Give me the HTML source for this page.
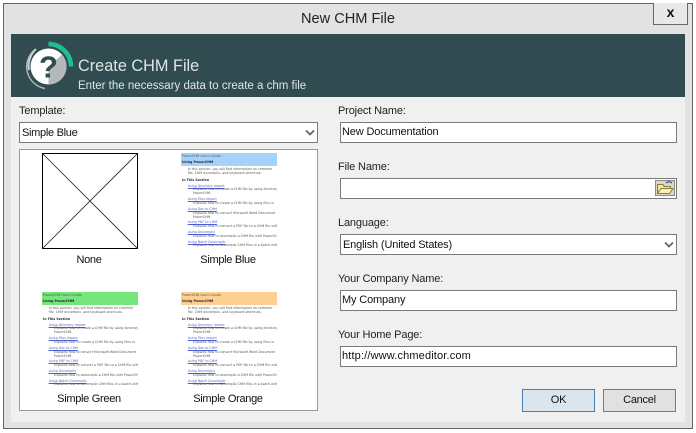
<!DOCTYPE html>
<html><head><meta charset="utf-8">
<style>
html,body{margin:0;padding:0;width:696px;height:433px;overflow:hidden;background:#fff}
body{position:relative;font-family:"Liberation Sans",sans-serif;color:#1a1a1a}
div,span{position:absolute;box-sizing:border-box;white-space:nowrap}
.lb{font-size:11px;line-height:18px;letter-spacing:-.15px;color:#222}
.in{background:#fff;border:1px solid #7a7a7a;font-size:11px;line-height:19px;padding-left:1px;letter-spacing:-.15px;height:21px;color:#111}
.cap{font-size:11px;line-height:18px;text-align:center;color:#111;letter-spacing:-.3px}
.th{width:96px;height:104px;overflow:hidden;font-family:"DejaVu Sans",sans-serif;font-size:3.25px;line-height:4px;color:#555;filter:blur(.2px);text-rendering:geometricPrecision}
.th span{transform:translateY(-2px)}
.th .a{color:#4a5fd0;text-decoration:underline;text-decoration-thickness:.3px}
.th .b{font-weight:bold;color:#222}
.hd{left:0;top:0;width:96px;height:12.5px}
.btn{font-size:11px;line-height:21px;text-align:center;height:23px;border:1px solid #7a7a7a;background:#e1e1e1;color:#111;letter-spacing:-.25px}
</style></head><body>
<div style="left:3px;top:3px;width:690px;height:426px;border:1px solid #666;background:#e2e2e2"></div>
<div style="left:11px;top:97px;width:674px;height:325px;background:#f0f0f0"></div>
<div style="left:11px;top:34px;width:674px;height:63px;background:#304c50"></div>
<div style="left:0;top:7px;width:696px;text-align:center;font-size:14.6px;line-height:24px;color:#222">New CHM File</div>
<div style="left:653px;top:3px;width:35px;height:22px;border:1px solid #666;border-top:0;background:#e8e8e8;text-align:center;font-weight:bold;font-size:14px;line-height:18px;color:#111">x</div>

<svg style="position:absolute;left:11px;top:34px" width="70" height="63" viewBox="11 34 70 63">
<path d="M48.5 44 A22.5 22.5 0 0 1 71 66.5" fill="none" stroke="#1fbf96" stroke-width="4.5"/>
<path d="M34.5 50 A22 22 0 0 0 45 88.5" fill="none" stroke="#aeb6b8" stroke-width="1.5"/>
<path d="M36 49 A23 23 0 0 0 29 70" fill="none" stroke="#c8cdce" stroke-width="2"/>
<circle cx="48.5" cy="66.5" r="18" fill="#fff"/>
<path d="M48.5 84.5 A18 18 0 0 0 66.5 66.5 A18 18 0 0 0 62 54.5 L48.5 66.5Z" fill="#b4b8ba"/>
<text x="48.5" y="77.5" text-anchor="middle" font-family="Liberation Sans" font-weight="bold" font-size="31" fill="#304c50">?</text>
</svg>
<div style="left:78px;top:55px;font-size:16.3px;line-height:22px;color:#dfe5e6">Create CHM File</div>
<div style="left:78px;top:78px;font-size:11.5px;line-height:17px;color:#dfe5e6">Enter the necessary data to create a chm file</div>

<div class="lb" style="left:19px;top:102px">Template:</div>
<div class="in" style="left:19px;top:122px;width:299px;padding-top:1px;padding-left:2px;letter-spacing:-.3px">Simple Blue</div>
<svg style="position:absolute;left:305px;top:129px" width="10" height="8"><path d="M1 1.5 L5 5.5 L9 1.5" fill="none" stroke="#666" stroke-width="1.8"/></svg>

<div style="left:19px;top:149px;width:299px;height:262px;background:#fff;border:1px solid #9a9a9a"></div>
<svg style="position:absolute;left:42px;top:153px" width="97" height="97"><rect x=".5" y=".5" width="95" height="95" fill="#fff" stroke="#000"/><path d="M.5 .5 L95.5 95.5 M95.5 .5 L.5 95.5" stroke="#222" stroke-width=".8"/></svg>
<div class="cap" style="left:19px;top:251px;width:140px">None</div>
<div class="cap" style="left:158px;top:251px;width:140px">Simple Blue</div>
<div class="cap" style="left:19px;top:390px;width:140px">Simple Green</div>
<div class="cap" style="left:158px;top:390px;width:140px">Simple Orange</div>

<div class="th" style="left:181px;top:153px">
<div class="hd" style="background:#a5d2fb"></div>
<span style="left:1px;top:3.3px">PowerCHM User's Guide</span><span class="b" style="left:1px;top:8.7px">Using PowerCHM</span>
<span style="left:6.7px;top:16.3px">In this section, you will find information on common</span><span style="left:6.7px;top:20.3px">file, CHM decompile, and keyboard shortcuts.</span>
<span class="b" style="left:1px;top:27px">In This Section</span>
<span class="a" style="left:6.7px;top:33px">Using Directory Import</span><span style="left:12px;top:36.3px">Explains how to create a CHM file by using directory</span><span style="left:12px;top:40.3px">PowerCHM.</span>
<span class="a" style="left:6.7px;top:46.3px">Using Files Import</span><span style="left:12px;top:50px">Explains how to create a CHM file by using files in</span>
<span class="a" style="left:6.7px;top:56px">Using Doc to CHM</span><span style="left:12px;top:59.7px">Explains how to convert Microsoft Word Document</span><span style="left:12px;top:63.7px">PowerCHM.</span>
<span class="a" style="left:6.7px;top:69.3px">Using PDF to CHM</span><span style="left:12px;top:73px">Explains how to convert a PDF file to a CHM file with</span>
<span class="a" style="left:6.7px;top:79.3px">Using Decompile</span><span style="left:12px;top:82.7px">Explains how to decompile a CHM file with PowerCHM</span>
<span class="a" style="left:6.7px;top:88.7px">Using Batch Decompile</span><span style="left:12px;top:92px">Explains how to decompile CHM files in a batch with</span>
</div>

<div class="th" style="left:42px;top:292px">
<div class="hd" style="background:#74e67c"></div>
<span style="left:1px;top:3.3px">PowerCHM User's Guide</span><span class="b" style="left:1px;top:8.7px">Using PowerCHM</span>
<span style="left:6.7px;top:16.3px">In this section, you will find information on common</span><span style="left:6.7px;top:20.3px">file, CHM decompile, and keyboard shortcuts.</span>
<span class="b" style="left:1px;top:27px">In This Section</span>
<span class="a" style="left:6.7px;top:33px">Using Directory Import</span><span style="left:12px;top:36.3px">Explains how to create a CHM file by using directory</span><span style="left:12px;top:40.3px">PowerCHM.</span>
<span class="a" style="left:6.7px;top:46.3px">Using Files Import</span><span style="left:12px;top:50px">Explains how to create a CHM file by using files in</span>
<span class="a" style="left:6.7px;top:56px">Using Doc to CHM</span><span style="left:12px;top:59.7px">Explains how to convert Microsoft Word Document</span><span style="left:12px;top:63.7px">PowerCHM.</span>
<span class="a" style="left:6.7px;top:69.3px">Using PDF to CHM</span><span style="left:12px;top:73px">Explains how to convert a PDF file to a CHM file with</span>
<span class="a" style="left:6.7px;top:79.3px">Using Decompile</span><span style="left:12px;top:82.7px">Explains how to decompile a CHM file with PowerCHM</span>
<span class="a" style="left:6.7px;top:88.7px">Using Batch Decompile</span><span style="left:12px;top:92px">Explains how to decompile CHM files in a batch with</span>
</div>

<div class="th" style="left:181px;top:292px">
<div class="hd" style="background:#fdcf90"></div>
<span style="left:1px;top:3.3px">PowerCHM User's Guide</span><span class="b" style="left:1px;top:8.7px">Using PowerCHM</span>
<span style="left:6.7px;top:16.3px">In this section, you will find information on common</span><span style="left:6.7px;top:20.3px">file, CHM decompile, and keyboard shortcuts.</span>
<span class="b" style="left:1px;top:27px">In This Section</span>
<span class="a" style="left:6.7px;top:33px">Using Directory Import</span><span style="left:12px;top:36.3px">Explains how to create a CHM file by using directory</span><span style="left:12px;top:40.3px">PowerCHM.</span>
<span class="a" style="left:6.7px;top:46.3px">Using Files Import</span><span style="left:12px;top:50px">Explains how to create a CHM file by using files in</span>
<span class="a" style="left:6.7px;top:56px">Using Doc to CHM</span><span style="left:12px;top:59.7px">Explains how to convert Microsoft Word Document</span><span style="left:12px;top:63.7px">PowerCHM.</span>
<span class="a" style="left:6.7px;top:69.3px">Using PDF to CHM</span><span style="left:12px;top:73px">Explains how to convert a PDF file to a CHM file with</span>
<span class="a" style="left:6.7px;top:79.3px">Using Decompile</span><span style="left:12px;top:82.7px">Explains how to decompile a CHM file with PowerCHM</span>
<span class="a" style="left:6.7px;top:88.7px">Using Batch Decompile</span><span style="left:12px;top:92px">Explains how to decompile CHM files in a batch with</span>
</div>

<div class="lb" style="left:338px;top:102px">Project Name:</div>
<div class="in" style="left:340px;top:122px;width:337px">New Documentation</div>
<div class="lb" style="left:338px;top:158px">File Name:</div>
<div class="in" style="left:340px;top:178px;width:337px"></div>
<svg style="position:absolute;left:655px;top:180px" width="20" height="16" viewBox="0 0 20 16">
<rect x=".5" y=".5" width="19" height="15" fill="#d9d9c8" stroke="#8a8a8a"/>
<path d="M2.5 13.5 L2.5 4.5 L8 4.5 L9 6.5 L15.5 6.5 L15.5 8.5" fill="#f5e7a0" stroke="#8a7a3a"/>
<path d="M2.5 13.5 L6 8.5 L18 8.5 L14.5 13.5Z" fill="#fbf1b8" stroke="#8a7a3a"/>
<path d="M11 3 Q14 0.5 17 3" fill="none" stroke="#3a4f9a" stroke-width="1.3"/>
</svg>
<div class="lb" style="left:338px;top:214px">Language:</div>
<div class="in" style="left:340px;top:234px;width:337px;padding-top:1px;padding-left:2px">English (United States)</div>
<svg style="position:absolute;left:664px;top:241px" width="10" height="8"><path d="M1 1.5 L5 5.5 L9 1.5" fill="none" stroke="#666" stroke-width="1.8"/></svg>
<div class="lb" style="left:338px;top:270px">Your Company Name:</div>
<div class="in" style="left:340px;top:290px;width:337px">My Company</div>
<div class="lb" style="left:338px;top:326px">Your Home Page:</div>
<div class="in" style="left:340px;top:346px;width:337px;letter-spacing:.15px">http://www.chmeditor.com</div>

<div class="btn" style="left:522px;top:389px;width:73px;background:#dbe5ee;border-color:#4b7ea8">OK</div>
<div class="btn" style="left:603px;top:389px;width:73px">Cancel</div>
</body></html>
